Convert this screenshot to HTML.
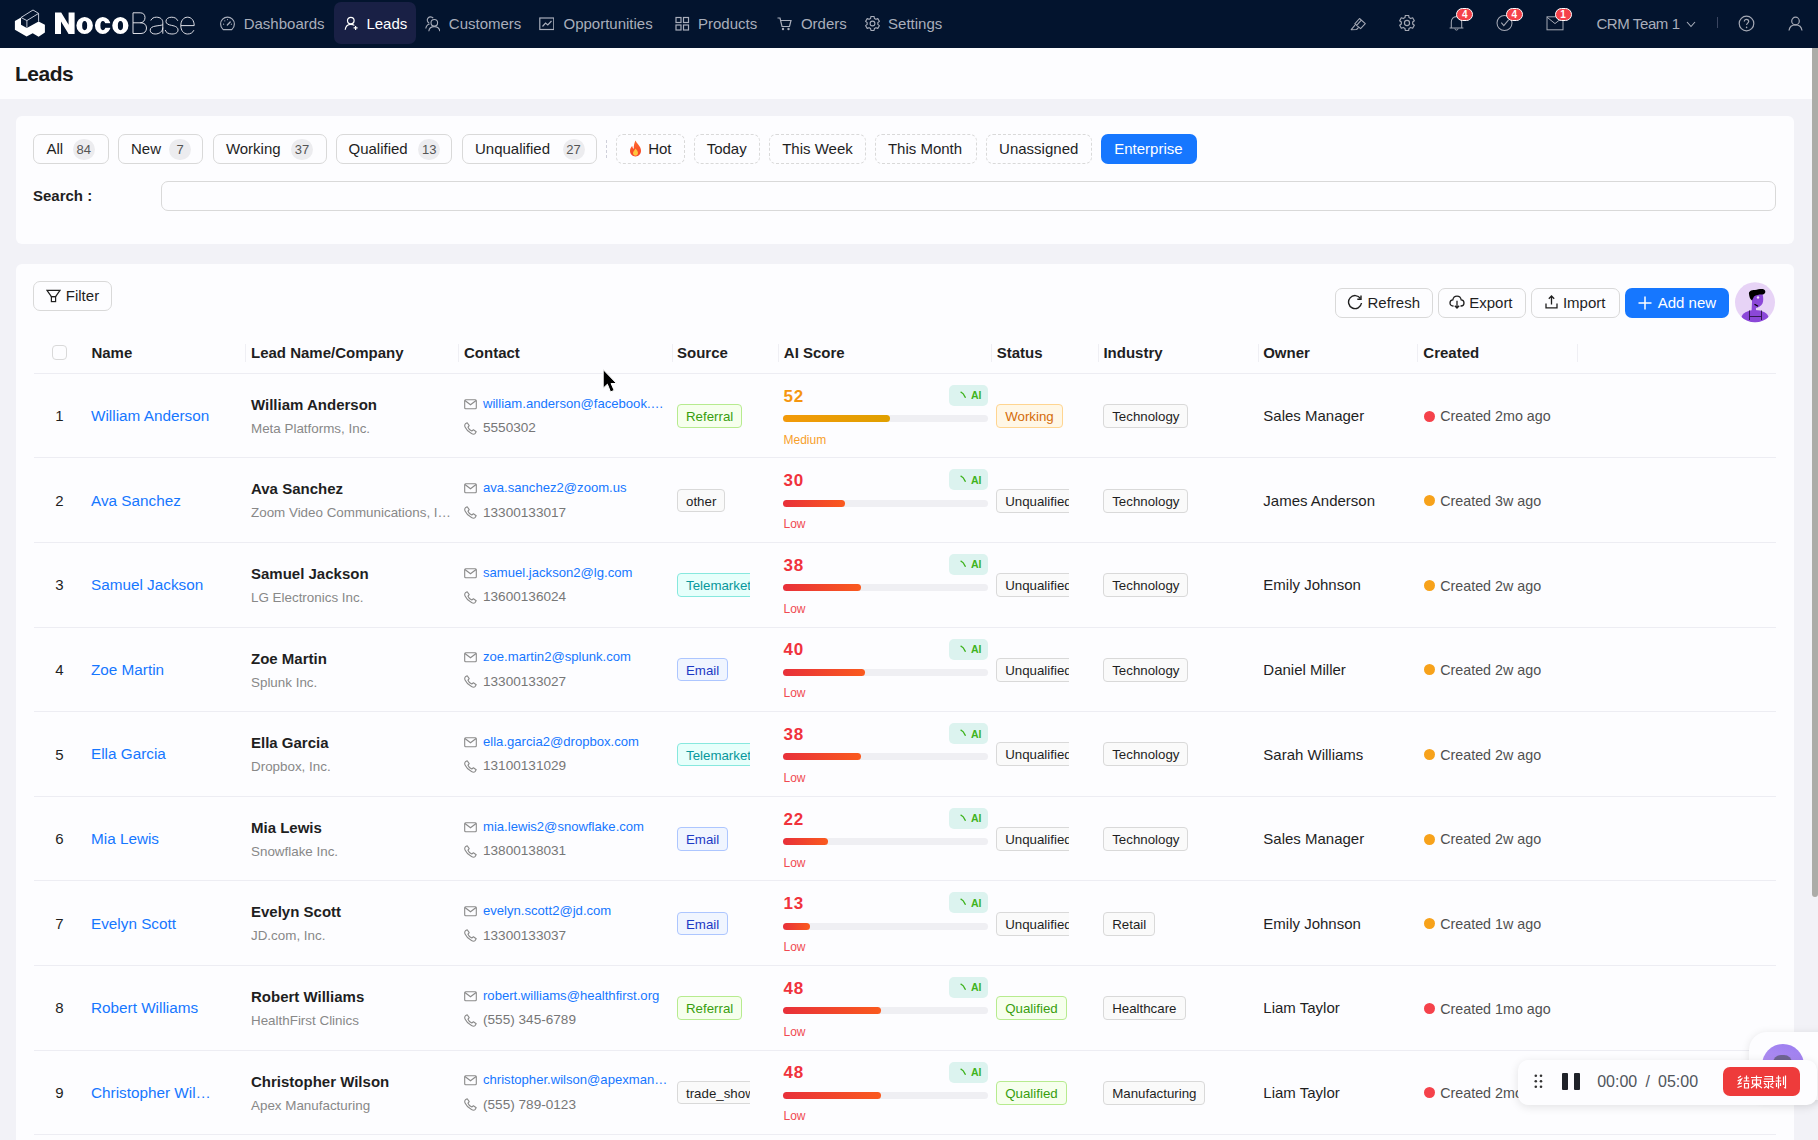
<!DOCTYPE html><html><head><meta charset="utf-8"><style>
html,body{margin:0;padding:0;}
body{width:1818px;height:1140px;overflow:hidden;position:relative;background:#f2f2f7;font-family:'Liberation Sans', sans-serif;}
.a{position:absolute;box-sizing:border-box;}
.t{position:absolute;white-space:nowrap;font-family:'Liberation Sans', sans-serif;}
</style></head><body>
<div class="a" style="left:0.0px;top:0.0px;width:1818.0px;height:48.0px;background:rgb(3,20,46);"></div>
<svg class="a" style="left:0.0px;top:0.0px;" width="50" height="45" viewBox="0 0 50 45">
<path d="M14.9 20.9 L21 17.5 L21 24.8 L26.8 27.9 L38.6 21.6 L44.9 24.8 L44.9 32.6 L38.6 36.7 L32.7 33.2 L26.6 36.5 L14.9 29.7 Z" fill="#fff"/>
<path d="M21 17.5 L33 10 L38.6 13.4 L38.6 21.6 M21 17.5 L26.9 20.6 L38.6 13.4 M26.9 20.6 L26.9 27.7" fill="none" stroke="#d8dbe6" stroke-width="0.9"/>
</svg>
<svg class="a" style="left:0.0px;top:0.0px;" width="200" height="48" viewBox="0 0 200 48"><path d="M55 12.4 H61.2 L68.6 24.8 V12.4 H74.6 V33.9 H68.6 L61 21.4 V33.9 H55 Z" fill="#fff"/>
<path fill-rule="evenodd" d="M76.40 25.5 A8.25 8.55 0 1 0 92.90 25.5 A8.25 8.55 0 1 0 76.40 25.5 Z M82.15 25.6 A2.5 4.6 0 1 0 87.15 25.6 A2.5 4.6 0 1 0 82.15 25.6 Z" fill="#fff"/>
<path fill-rule="evenodd" d="M94.90 25.5 A7.9 8.55 0 1 0 110.70 25.5 A7.9 8.55 0 1 0 94.90 25.5 Z M100.40 25.6 A2.5 4.6 0 1 0 105.40 25.6 A2.5 4.6 0 1 0 100.40 25.6 Z" fill="#fff"/>
<rect x="104.8" y="23.2" width="7" height="4.6" fill="rgb(3,20,46)"/>
<path fill-rule="evenodd" d="M112.25 25.5 A8.1 8.55 0 1 0 128.45 25.5 A8.1 8.55 0 1 0 112.25 25.5 Z M117.85 25.6 A2.6 4.6 0 1 0 123.05 25.6 A2.6 4.6 0 1 0 117.85 25.6 Z" fill="#fff"/>
<g fill="none" stroke="#e8e8ee" stroke-width="0.95">
<path d="M133 12.8 V33.5 H141 C144.5 33.5 146.5 31.2 146.5 28 C146.5 24.8 144.2 22.8 140.8 22.8 H133 M133 12.8 H140.2 C143.3 12.8 145 14.7 145 17.6 C145 20.6 143 22.8 140.2 22.8"/>
<path d="M150.8 20.5 C151.8 18.2 153.8 17.2 156.4 17.2 C160.4 17.2 162.8 19.2 162.8 22.8 V33.7 M162.8 24.8 C161.5 25.3 158.5 25.6 156 26 C152.3 26.5 150.2 27.8 150.2 30.2 C150.2 32.6 152.3 34 155.2 34 C159.3 34 162.8 31.5 162.8 27.5"/>
<path d="M177.8 20.8 C176.8 18.5 174.6 17.2 171.7 17.2 C168.3 17.2 166 18.8 166 21.3 C166 23.8 168.3 24.8 171.7 25.4 C175.5 26.1 178 27.3 178 30 C178 32.7 175.5 34 171.9 34 C168.5 34 165.8 32.5 165.2 30"/>
<path d="M180.8 25.6 H194.2 C194.2 20.5 191.5 17.2 187.5 17.2 C183.4 17.2 180.8 20.8 180.8 25.6 C180.8 30.4 183.5 34 187.6 34 C190.6 34 192.8 32.6 193.9 30.2"/>
</g></svg>
<div class="a" style="left:334.0px;top:2.0px;width:82.0px;height:42.0px;background:#192045;border-radius:7px;"></div>
<svg class="a" style="left:220.0px;top:16.0px;" width="15" height="16" viewBox="0 0 15 16"><path d="M3.2 13.6 C1.5 12.2 0.6 10.2 0.6 8 C0.6 4.1 3.7 1.2 7.5 1.2 C11.3 1.2 14.4 4.1 14.4 8 C14.4 10.2 13.5 12.2 11.8 13.6 Z" fill="none" stroke="#a9aebb" stroke-width="1.15" stroke-linejoin="round"/><path d="M7.3 9 L10.2 6" stroke="#a9aebb" stroke-width="1.3" stroke-linecap="round"/><circle cx="3.6" cy="8.2" r="0.6" fill="#a9aebb"/><circle cx="4.8" cy="4.8" r="0.6" fill="#a9aebb"/><circle cx="7.5" cy="3.6" r="0.6" fill="#a9aebb"/><circle cx="11.4" cy="8.2" r="0.6" fill="#a9aebb"/></svg>
<div class="t" style="left:243.7px;top:15.90px;font-size:15px;line-height:15px;color:#a9aebb;">Dashboards</div>
<svg class="a" style="left:343.6px;top:16.0px;" width="15" height="16" viewBox="0 0 15 16"><circle cx="6.8" cy="4.6" r="3.3" fill="none" stroke="#ffffff" stroke-width="1.2"/><path d="M1.2 13.8 C1.6 10.2 3.9 8.3 6.8 8.3 C8.2 8.3 9.5 8.7 10.4 9.4" fill="none" stroke="#ffffff" stroke-width="1.2"/><path d="M9.6 11.9 H13.6 M11.6 9.9 V13.9" stroke="#ffffff" stroke-width="1.2"/></svg>
<div class="t" style="left:366.4px;top:15.90px;font-size:15px;line-height:15px;color:#ffffff;">Leads</div>
<svg class="a" style="left:425.0px;top:16.0px;" width="15" height="16" viewBox="0 0 15 16"><path d="M8.2 2.2 A3.3 3.3 0 1 0 4.2 7.2" fill="none" stroke="#a9aebb" stroke-width="1.1"/><path d="M0.8 12.5 C1.2 10 2.8 8.4 4.6 8" fill="none" stroke="#a9aebb" stroke-width="1.1"/><circle cx="9.3" cy="6.8" r="3.3" fill="none" stroke="#a9aebb" stroke-width="1.1"/><path d="M3.8 15.2 C4.2 12.2 6.4 10.6 9.3 10.6 C12.2 10.6 14.4 12.2 14.8 15.2" fill="none" stroke="#a9aebb" stroke-width="1.1"/></svg>
<div class="t" style="left:448.8px;top:15.90px;font-size:15px;line-height:15px;color:#a9aebb;">Customers</div>
<svg class="a" style="left:539.0px;top:16.0px;" width="15" height="16" viewBox="0 0 15 16"><rect x="0.8" y="2" width="14" height="11.5" fill="none" stroke="#a9aebb" stroke-width="1.2"/><path d="M3.5 10.5 L6.5 7 L8.8 9 L12.5 5" fill="none" stroke="#a9aebb" stroke-width="1.2"/></svg>
<div class="t" style="left:563.5px;top:15.90px;font-size:15px;line-height:15px;color:#a9aebb;">Opportunities</div>
<svg class="a" style="left:675.0px;top:16.0px;" width="15" height="16" viewBox="0 0 15 16"><rect x="1" y="1.5" width="5" height="5" fill="none" stroke="#a9aebb" stroke-width="1.2"/><rect x="8.5" y="1.5" width="5" height="5" fill="none" stroke="#a9aebb" stroke-width="1.2"/><rect x="1" y="9" width="5" height="5" fill="none" stroke="#a9aebb" stroke-width="1.2"/><rect x="8.5" y="9" width="5" height="5" fill="none" stroke="#a9aebb" stroke-width="1.2"/></svg>
<div class="t" style="left:698.0px;top:15.90px;font-size:15px;line-height:15px;color:#a9aebb;">Products</div>
<svg class="a" style="left:777.0px;top:16.0px;" width="15" height="16" viewBox="0 0 15 16"><path d="M0.5 2 H3 L5 10.5 H12.5 L14 4.5 H4" fill="none" stroke="#a9aebb" stroke-width="1.2"/><circle cx="6" cy="13" r="1.2" fill="#a9aebb"/><circle cx="11.5" cy="13" r="1.2" fill="#a9aebb"/></svg>
<div class="t" style="left:800.9px;top:15.90px;font-size:15px;line-height:15px;color:#a9aebb;">Orders</div>
<svg class="a" style="left:865.0px;top:16.0px;" width="15" height="16" viewBox="0 0 15 16"><path d="M5.60 2.45 L5.93 0.47 L9.07 0.47 L9.40 2.45 L10.93 3.33 L12.80 2.63 L14.37 5.35 L12.83 6.62 L12.83 8.38 L14.37 9.65 L12.80 12.37 L10.93 11.67 L9.40 12.55 L9.07 14.53 L5.93 14.53 L5.60 12.55 L4.07 11.67 L2.20 12.37 L0.63 9.65 L2.17 8.38 L2.17 6.62 L0.63 5.35 L2.20 2.63 L4.07 3.33 Z" fill="none" stroke="#a9aebb" stroke-width="1.1" stroke-linejoin="round"/><circle cx="7.5" cy="7.5" r="2.4" fill="none" stroke="#a9aebb" stroke-width="1.1"/></svg>
<div class="t" style="left:888.1px;top:15.90px;font-size:15px;line-height:15px;color:#a9aebb;">Settings</div>
<svg class="a" style="left:1349.0px;top:16.0px;" width="18" height="16" viewBox="0 0 18 16"><path d="M5.8 7.8 L10.5 2.5 L16.3 7.6 L11.6 12.6 Z M7.6 9.3 L12.1 4.3" fill="none" stroke="#a3a7b3" stroke-width="1.1" stroke-linejoin="round"/><path d="M6 9.2 L2.2 13.7 L7.6 13.5 L9.6 11.4" fill="none" stroke="#a3a7b3" stroke-width="1.1" stroke-linejoin="round"/></svg>
<svg class="a" style="left:1399.0px;top:15.0px;" width="16" height="16" viewBox="0 0 15 15"><path d="M5.60 2.45 L5.93 0.47 L9.07 0.47 L9.40 2.45 L10.93 3.33 L12.80 2.63 L14.37 5.35 L12.83 6.62 L12.83 8.38 L14.37 9.65 L12.80 12.37 L10.93 11.67 L9.40 12.55 L9.07 14.53 L5.93 14.53 L5.60 12.55 L4.07 11.67 L2.20 12.37 L0.63 9.65 L2.17 8.38 L2.17 6.62 L0.63 5.35 L2.20 2.63 L4.07 3.33 Z" fill="none" stroke="#a3a7b3" stroke-width="1.1" stroke-linejoin="round"/><circle cx="7.5" cy="7.5" r="2.4" fill="none" stroke="#a3a7b3" stroke-width="1.1"/></svg>
<svg class="a" style="left:1449.0px;top:14.0px;" width="15" height="18" viewBox="0 0 15 18"><path d="M2.3 14 V8 C2.3 4.6 4.4 2.6 7.5 2.6 C10.6 2.6 12.7 4.6 12.7 8 V14 M0.6 14 H14.4" fill="none" stroke="#a3a7b3" stroke-width="1.05"/><path d="M5.9 14.6 C5.9 16.6 9.1 16.6 9.1 14.6" fill="none" stroke="#a3a7b3" stroke-width="1"/></svg>
<svg class="a" style="left:1496.0px;top:13.0px;" width="18" height="19" viewBox="0 0 18 19"><circle cx="8.5" cy="10" r="7.5" fill="none" stroke="#a3a7b3" stroke-width="1.05"/><path d="M5.3 9.6 L7.8 12.6 L12.6 6.8" fill="none" stroke="#a3a7b3" stroke-width="1.05"/></svg>
<svg class="a" style="left:1545.5px;top:15.5px;" width="18" height="15" viewBox="0 0 18 15"><rect x="1" y="0.8" width="16" height="13" fill="none" stroke="#a3a7b3" stroke-width="1"/><path d="M1 1.2 L9 7.6 L17 1.2" fill="none" stroke="#a3a7b3" stroke-width="1"/></svg>
<div class="a" style="left:1456.2px;top:7.8px;width:17px;height:13.5px;background:#f5424a;border:1px solid #fff;border-radius:7px;color:#fff;font:700 10px/11.5px 'Liberation Sans', sans-serif;text-align:center;">4</div>
<div class="a" style="left:1505.7px;top:7.8px;width:17px;height:13.5px;background:#f5424a;border:1px solid #fff;border-radius:7px;color:#fff;font:700 10px/11.5px 'Liberation Sans', sans-serif;text-align:center;">4</div>
<div class="a" style="left:1554.5px;top:7.8px;width:17px;height:13.5px;background:#f5424a;border:1px solid #fff;border-radius:7px;color:#fff;font:700 10px/11.5px 'Liberation Sans', sans-serif;text-align:center;">1</div>
<div class="t" style="left:1596.4px;top:16.00px;font-size:15px;line-height:15px;color:#a9aebb;letter-spacing:-0.4px;">CRM Team 1</div>
<svg class="a" style="left:1686.0px;top:21.0px;" width="10" height="7" viewBox="0 0 10 7"><path d="M1 1 L5 5.5 L9 1" fill="none" stroke="#a9aebb" stroke-width="1.1"/></svg>
<div class="a" style="left:1717.0px;top:17.0px;width:1.0px;height:11.0px;background:#3a4560;"></div>
<svg class="a" style="left:1738.0px;top:15.0px;" width="17" height="17" viewBox="0 0 17 17"><circle cx="8.5" cy="8.5" r="7.3" fill="none" stroke="#a3a7b3" stroke-width="1.2"/><path d="M6.3 6.6 C6.3 5.2 7.3 4.3 8.5 4.3 C9.8 4.3 10.7 5.2 10.7 6.4 C10.7 8 8.6 8.2 8.6 10" fill="none" stroke="#a3a7b3" stroke-width="1.2"/><circle cx="8.6" cy="12.4" r="0.8" fill="#a3a7b3"/></svg>
<svg class="a" style="left:1788.0px;top:16.0px;" width="15" height="15" viewBox="0 0 15 15"><circle cx="7.5" cy="5" r="3.8" fill="none" stroke="#a3a7b3" stroke-width="1.2"/><path d="M1 14.5 C1.5 10.7 4 8.8 7.5 8.8 C11 8.8 13.5 10.7 14 14.5" fill="none" stroke="#a3a7b3" stroke-width="1.2"/></svg>
<div class="a" style="left:0.0px;top:48.0px;width:1812.0px;height:51.0px;background:#fdfdff;"></div>
<div class="t" style="left:15.0px;top:62.80px;font-size:21px;line-height:21px;color:#1a1a1a;font-weight:700;letter-spacing:-0.5px;">Leads</div>
<div class="a" style="left:1812.0px;top:48.0px;width:6.0px;height:849.0px;background:#acaca8;border-radius:0 0 3px 3px;"></div>
<div class="a" style="left:16.0px;top:116.0px;width:1778.0px;height:128.0px;background:#fdfdff;border-radius:6px;"></div>
<div class="a" style="left:33.0px;top:134.0px;width:76.0px;height:30.0px;background:#fdfdff;border:1px solid #d9d9d9;border-radius:7px;"></div>
<div class="t" style="left:46.4px;top:141.00px;font-size:15px;line-height:15px;color:#1f1f1f;">All</div>
<div class="a" style="left:72.8px;top:138.7px;width:22px;height:21px;border-radius:11px;background:#ececef;color:#555;font:13px/21px 'Liberation Sans', sans-serif;text-align:center;">84</div>
<div class="a" style="left:118.0px;top:134.0px;width:85.0px;height:30.0px;background:#fdfdff;border:1px solid #d9d9d9;border-radius:7px;"></div>
<div class="t" style="left:131.0px;top:141.00px;font-size:15px;line-height:15px;color:#1f1f1f;">New</div>
<div class="a" style="left:169.0px;top:138.7px;width:22px;height:21px;border-radius:11px;background:#ececef;color:#555;font:13px/21px 'Liberation Sans', sans-serif;text-align:center;">7</div>
<div class="a" style="left:213.0px;top:134.0px;width:114.0px;height:30.0px;background:#fdfdff;border:1px solid #d9d9d9;border-radius:7px;"></div>
<div class="t" style="left:225.9px;top:141.00px;font-size:15px;line-height:15px;color:#1f1f1f;">Working</div>
<div class="a" style="left:291.0px;top:138.7px;width:22px;height:21px;border-radius:11px;background:#ececef;color:#555;font:13px/21px 'Liberation Sans', sans-serif;text-align:center;">37</div>
<div class="a" style="left:336.0px;top:134.0px;width:116.0px;height:30.0px;background:#fdfdff;border:1px solid #d9d9d9;border-radius:7px;"></div>
<div class="t" style="left:348.5px;top:141.00px;font-size:15px;line-height:15px;color:#1f1f1f;">Qualified</div>
<div class="a" style="left:418.2px;top:138.7px;width:22px;height:21px;border-radius:11px;background:#ececef;color:#555;font:13px/21px 'Liberation Sans', sans-serif;text-align:center;">13</div>
<div class="a" style="left:462.0px;top:134.0px;width:135.0px;height:30.0px;background:#fdfdff;border:1px solid #d9d9d9;border-radius:7px;"></div>
<div class="t" style="left:475.0px;top:141.00px;font-size:15px;line-height:15px;color:#1f1f1f;">Unqualified</div>
<div class="a" style="left:562.6px;top:138.7px;width:22px;height:21px;border-radius:11px;background:#ececef;color:#555;font:13px/21px 'Liberation Sans', sans-serif;text-align:center;">27</div>
<div class="a" style="left:606.0px;top:140.0px;width:1.0px;height:18.0px;border-left:1px dashed #cfd0da;"></div>
<div class="a" style="left:616.0px;top:134.0px;width:69.0px;height:30.0px;background:#fdfdff;border:1px dashed #d9d9d9;border-radius:7px;"></div>
<svg class="a" style="left:629.0px;top:140.0px;" width="13" height="17" viewBox="0 0 13 17"><defs><linearGradient id="fl" x1="0" y1="0" x2="0" y2="1"><stop offset="0" stop-color="#ff6a2b"/><stop offset="1" stop-color="#f5402a"/></linearGradient></defs><path d="M6.5 0.5 C7.5 3.5 12 6 12 10.8 C12 14 9.6 16.5 6.5 16.5 C3.4 16.5 1 14 1 10.8 C1 8.5 2.2 7 3.2 6 C3.4 7.5 4 8.5 4.8 8.8 C4.5 5.5 5.5 2.5 6.5 0.5 Z" fill="url(#fl)"/><path d="M6.5 8.5 C7.5 10 9 11 9 13 C9 14.6 7.9 15.8 6.5 15.8 C5.1 15.8 4 14.6 4 13 C4 11.5 5.5 10.5 6.5 8.5 Z" fill="#ffc53d"/></svg>
<div class="t" style="left:648.2px;top:141.00px;font-size:15px;line-height:15px;color:#1f1f1f;">Hot</div>
<div class="a" style="left:694.0px;top:134.0px;width:66.0px;height:30.0px;background:#fdfdff;border:1px dashed #d9d9d9;border-radius:7px;"></div>
<div class="t" style="left:706.7px;top:141.00px;font-size:15px;line-height:15px;color:#1f1f1f;">Today</div>
<div class="a" style="left:769.0px;top:134.0px;width:97.0px;height:30.0px;background:#fdfdff;border:1px dashed #d9d9d9;border-radius:7px;"></div>
<div class="t" style="left:782.2px;top:141.00px;font-size:15px;line-height:15px;color:#1f1f1f;">This Week</div>
<div class="a" style="left:875.0px;top:134.0px;width:102.0px;height:30.0px;background:#fdfdff;border:1px dashed #d9d9d9;border-radius:7px;"></div>
<div class="t" style="left:887.9px;top:141.00px;font-size:15px;line-height:15px;color:#1f1f1f;">This Month</div>
<div class="a" style="left:986.0px;top:134.0px;width:106.0px;height:30.0px;background:#fdfdff;border:1px dashed #d9d9d9;border-radius:7px;"></div>
<div class="t" style="left:999.1px;top:141.00px;font-size:15px;line-height:15px;color:#1f1f1f;">Unassigned</div>
<div class="a" style="left:1101.0px;top:134.0px;width:96.0px;height:30.0px;background:#1677ff;border-radius:7px;"></div>
<div class="t" style="left:1114.2px;top:141.00px;font-size:15px;line-height:15px;color:#fff;">Enterprise</div>
<div class="t" style="left:33.0px;top:188.20px;font-size:15px;line-height:15px;color:#1f1f1f;font-weight:700;">Search :</div>
<div class="a" style="left:161.0px;top:181.0px;width:1615.0px;height:30.0px;border:1px solid #d9d9d9;border-radius:7px;background:#fdfdff;"></div>
<div class="a" style="left:16.0px;top:264.0px;width:1778.0px;height:936.0px;background:#fdfdff;border-radius:6px;"></div>
<div class="a" style="left:33.0px;top:281.0px;width:79.0px;height:30.0px;border:1px solid #d9d9d9;border-radius:7px;"></div>
<svg class="a" style="left:46.0px;top:289.0px;" width="15" height="15" viewBox="0 0 15 15"><path d="M1 1.4 H14 L9.6 7.6 H5.4 Z" fill="none" stroke="#1f1f1f" stroke-width="1.2" stroke-linejoin="miter"/><rect x="5.4" y="7.6" width="4.2" height="5" fill="none" stroke="#1f1f1f" stroke-width="1.2"/></svg>
<div class="t" style="left:65.8px;top:288.10px;font-size:15px;line-height:15px;color:#1f1f1f;">Filter</div>
<div class="a" style="left:1335.0px;top:288.0px;width:97.5px;height:29.5px;border:1px solid #d9d9d9;border-radius:7px;"></div>
<div class="a" style="left:1437.6px;top:288.0px;width:88.6px;height:29.5px;border:1px solid #d9d9d9;border-radius:7px;"></div>
<div class="a" style="left:1531.2px;top:288.0px;width:89.3px;height:29.5px;border:1px solid #d9d9d9;border-radius:7px;"></div>
<svg class="a" style="left:1347.0px;top:294.0px;" width="16" height="16" viewBox="0 0 16 16"><path d="M13.5 4.5 A6.5 6.5 0 1 0 14.5 9" fill="none" stroke="#1f1f1f" stroke-width="1.4"/><path d="M14 1.5 V5.2 H10.3" fill="none" stroke="#1f1f1f" stroke-width="1.4"/></svg>
<div class="t" style="left:1367.5px;top:295.10px;font-size:15px;line-height:15px;color:#1f1f1f;">Refresh</div>
<svg class="a" style="left:1449.0px;top:295.0px;" width="16" height="14" viewBox="0 0 16 14"><path d="M4.5 11 H4 C2.2 11 1 9.7 1 8 C1 6.3 2.2 5 3.8 4.9 C4.2 2.7 6 1.2 8 1.2 C10 1.2 11.8 2.7 12.2 4.9 C13.8 5 15 6.3 15 8 C15 9.7 13.8 11 12 11 H11.5" fill="none" stroke="#1f1f1f" stroke-width="1.3"/><path d="M8 5.8 V13 M5.8 10.8 L8 13 L10.2 10.8" fill="none" stroke="#1f1f1f" stroke-width="1.3"/></svg>
<div class="t" style="left:1469.2px;top:295.10px;font-size:15px;line-height:15px;color:#1f1f1f;">Export</div>
<svg class="a" style="left:1544.5px;top:295.0px;" width="13" height="14" viewBox="0 0 13 14"><path d="M6.5 1 V9.5 M3.8 3.7 L6.5 1 L9.2 3.7" fill="none" stroke="#1f1f1f" stroke-width="1.3"/><path d="M1 8.5 V12.8 H12 V8.5" fill="none" stroke="#1f1f1f" stroke-width="1.3"/></svg>
<div class="t" style="left:1562.9px;top:295.10px;font-size:15px;line-height:15px;color:#1f1f1f;">Import</div>
<div class="a" style="left:1625.4px;top:288.0px;width:104.0px;height:29.5px;background:#1677ff;border-radius:7px;"></div>
<svg class="a" style="left:1638.0px;top:296.0px;" width="14" height="14" viewBox="0 0 14 14"><path d="M7 0.5 V13.5 M0.5 7 H13.5" stroke="#fff" stroke-width="1.5"/></svg>
<div class="t" style="left:1657.7px;top:295.10px;font-size:15px;line-height:15px;color:#fff;">Add new</div>
<svg class="a" style="left:1735.0px;top:282.0px;" width="40" height="41" viewBox="0 0 40 41"><defs><clipPath id="av"><circle cx="20" cy="20.3" r="20"/></clipPath></defs>
<circle cx="20" cy="20.3" r="20" fill="#e7d3f6"/>
<g clip-path="url(#av)">
<ellipse cx="20" cy="36" rx="13.5" ry="8" fill="#8b47d8"/>
<path d="M17 12.5 L27.5 12 C28.5 15 28.5 19 27.5 21.5 C26 24 23.5 25.5 21 26 L21 30 L16.5 30 L17 20 Z" fill="#8b47d8"/>
<path d="M14 12 C13.5 9.5 16 8 20 8 C24 7 28.5 6 30 8.5 C31 10.5 29.5 12.5 27 12.5 C24 12.5 21 13 19 14.5 L17 18.5 C15 17 14.2 14.5 14 12 Z" fill="#000"/>
<path d="M19.5 22.3 L23 24.3" stroke="#000" stroke-width="1.3"/>
<circle cx="23" cy="15.5" r="1.2" fill="#f0e0ff"/>
<path d="M14.5 28.5 V38 M26.5 28.5 V38 M14.5 34.5 H26.5" stroke="#2b1545" stroke-width="0.9"/>
</g></svg>
<div class="a" style="left:52.0px;top:345.0px;width:15.0px;height:15.0px;border:1px solid #d9d9d9;border-radius:4px;background:#fdfdff;"></div>
<div class="t" style="left:91.4px;top:345.40px;font-size:15px;line-height:15px;color:#1f1f1f;font-weight:700;">Name</div>
<div class="t" style="left:251.0px;top:345.40px;font-size:15px;line-height:15px;color:#1f1f1f;font-weight:700;">Lead Name/Company</div>
<div class="t" style="left:464.0px;top:345.40px;font-size:15px;line-height:15px;color:#1f1f1f;font-weight:700;">Contact</div>
<div class="t" style="left:677.0px;top:345.40px;font-size:15px;line-height:15px;color:#1f1f1f;font-weight:700;">Source</div>
<div class="t" style="left:783.8px;top:345.40px;font-size:15px;line-height:15px;color:#1f1f1f;font-weight:700;">AI Score</div>
<div class="t" style="left:996.7px;top:345.40px;font-size:15px;line-height:15px;color:#1f1f1f;font-weight:700;">Status</div>
<div class="t" style="left:1103.4px;top:345.40px;font-size:15px;line-height:15px;color:#1f1f1f;font-weight:700;">Industry</div>
<div class="t" style="left:1263.2px;top:345.40px;font-size:15px;line-height:15px;color:#1f1f1f;font-weight:700;">Owner</div>
<div class="t" style="left:1423.3px;top:345.40px;font-size:15px;line-height:15px;color:#1f1f1f;font-weight:700;">Created</div>
<div class="a" style="left:244.8px;top:344.0px;width:1.0px;height:18.0px;background:#efeff4;"></div>
<div class="a" style="left:457.7px;top:344.0px;width:1.0px;height:18.0px;background:#efeff4;"></div>
<div class="a" style="left:672.0px;top:344.0px;width:1.0px;height:18.0px;background:#efeff4;"></div>
<div class="a" style="left:777.8px;top:344.0px;width:1.0px;height:18.0px;background:#efeff4;"></div>
<div class="a" style="left:991.0px;top:344.0px;width:1.0px;height:18.0px;background:#efeff4;"></div>
<div class="a" style="left:1098.0px;top:344.0px;width:1.0px;height:18.0px;background:#efeff4;"></div>
<div class="a" style="left:1257.8px;top:344.0px;width:1.0px;height:18.0px;background:#efeff4;"></div>
<div class="a" style="left:1417.3px;top:344.0px;width:1.0px;height:18.0px;background:#efeff4;"></div>
<div class="a" style="left:1576.8px;top:344.0px;width:1.0px;height:18.0px;background:#efeff4;"></div>
<div class="a" style="left:34.0px;top:372.8px;width:1742.0px;height:1.0px;background:#ededf3;"></div>
<div class="t" style="left:55.2px;top:408.10px;font-size:15px;line-height:15px;color:#1f1f1f;">1</div>
<div class="t" style="left:91.0px;top:407.95px;font-size:15.3px;line-height:15.3px;color:#1677ff;">William Anderson</div>
<div class="t" style="left:251.0px;top:396.70px;font-size:15px;line-height:15px;color:#1f1f1f;font-weight:700;">William Anderson</div>
<div class="t" style="left:251.0px;top:421.80px;font-size:13.4px;line-height:13.4px;color:#888888;">Meta Platforms, Inc.</div>
<svg class="a" style="left:464.0px;top:398.6px;" width="13" height="11" viewBox="0 0 13 11"><rect x="0.7" y="0.7" width="11.6" height="9" rx="1" fill="none" stroke="#8a8a8a" stroke-width="1.1"/><path d="M0.9 1.5 L6.5 5.8 L12.1 1.5" fill="none" stroke="#8a8a8a" stroke-width="1.1"/></svg>
<div class="t" style="left:483.0px;top:396.55px;font-size:13.1px;line-height:13.1px;color:#1677ff;">william.anderson@facebook.…</div>
<svg class="a" style="left:464.0px;top:421.5px;" width="13" height="13" viewBox="0 0 13 13"><path d="M3.2 0.8 L5.2 3.6 L4 5.2 C4.6 6.8 6.2 8.4 7.8 9 L9.4 7.8 L12.2 9.8 L11 11.6 C10.2 12.4 9 12.4 7.5 11.6 C4.5 10 2.5 8 1.2 5.2 C0.5 3.8 0.6 2.6 1.4 1.8 Z" fill="none" stroke="#8a8a8a" stroke-width="1.1" stroke-linejoin="round"/></svg>
<div class="t" style="left:483.0px;top:421.00px;font-size:13.6px;line-height:13.6px;color:#777777;">5550302</div>
<div class="a" style="left:677.0px;top:404.1px;height:23.5px;"><div class="a" style="left:0;top:0;height:23.5px;border:1px solid #b7eb8f;background:#f6ffed;border-radius:4px;padding:0 8px;color:#389e0d;font:13.3px/23.1px 'Liberation Sans', sans-serif;white-space:nowrap;position:relative;display:inline-block;">Referral</div></div>
<div class="t" style="left:783.6px;top:387.50px;font-size:17px;line-height:17px;color:#f5960f;font-weight:700;letter-spacing:0.7px;">52</div>
<div class="a" style="left:949px;top:384.8px;width:39px;height:21px;background:#dcf3ef;border-radius:5px;"></div>
<svg class="a" style="left:959.5px;top:390.8px;" width="7" height="8" viewBox="0 0 7 8"><path d="M1 1.2 C2.5 1.8 4 3.5 5.2 6.3" fill="none" stroke="#3fb31e" stroke-width="1.4" stroke-linecap="round"/></svg>
<div class="t" style="left:971.0px;top:390.25px;font-size:10.5px;line-height:10.5px;color:#3fb31e;font-weight:700;">AI</div>
<div class="a" style="left:783.0px;top:414.9px;width:205.0px;height:7.0px;background:#efeff3;border-radius:4px;"></div>
<div class="a" style="left:783.0px;top:414.9px;width:106.6px;height:7.0px;background:linear-gradient(90deg,#f39a0a,#e0a000);border-radius:4px;"></div>
<div class="t" style="left:783.5px;top:433.65px;font-size:12px;line-height:12px;color:#f7a02a;">Medium</div>
<div class="a" style="left:996.2px;top:403.9px;height:24px;"><div class="a" style="left:0;top:0;height:24px;border:1px solid #ffd591;background:#fff7e6;border-radius:4px;padding:0 8px;color:#d46b08;font:13.3px/23.6px 'Liberation Sans', sans-serif;white-space:nowrap;position:relative;display:inline-block;">Working</div></div>
<div class="a" style="left:1103.2px;top:403.9px;height:24px;"><div class="a" style="left:0;top:0;height:24px;border:1px solid #d9d9d9;background:#fafafa;border-radius:4px;padding:0 8px;color:#1f1f1f;font:13.3px/23.6px 'Liberation Sans', sans-serif;white-space:nowrap;position:relative;display:inline-block;">Technology</div></div>
<div class="t" style="left:1263.3px;top:408.25px;font-size:15px;line-height:15px;color:#1f1f1f;">Sales Manager</div>
<div class="a" style="left:1423.7px;top:410.6px;width:11px;height:11px;border-radius:50%;background:#f5424b;"></div>
<div class="t" style="left:1440.2px;top:409.35px;font-size:14.3px;line-height:14.3px;color:#505050;">Created 2mo ago</div>
<div class="a" style="left:34.0px;top:457.4px;width:1742.0px;height:1.0px;background:#ededf3;"></div>
<div class="t" style="left:55.2px;top:492.70px;font-size:15px;line-height:15px;color:#1f1f1f;">2</div>
<div class="t" style="left:91.0px;top:492.55px;font-size:15.3px;line-height:15.3px;color:#1677ff;">Ava Sanchez</div>
<div class="t" style="left:251.0px;top:481.30px;font-size:15px;line-height:15px;color:#1f1f1f;font-weight:700;">Ava Sanchez</div>
<div class="t" style="left:251.0px;top:506.40px;font-size:13.4px;line-height:13.4px;color:#888888;">Zoom Video Communications, I…</div>
<svg class="a" style="left:464.0px;top:483.2px;" width="13" height="11" viewBox="0 0 13 11"><rect x="0.7" y="0.7" width="11.6" height="9" rx="1" fill="none" stroke="#8a8a8a" stroke-width="1.1"/><path d="M0.9 1.5 L6.5 5.8 L12.1 1.5" fill="none" stroke="#8a8a8a" stroke-width="1.1"/></svg>
<div class="t" style="left:483.0px;top:481.15px;font-size:13.1px;line-height:13.1px;color:#1677ff;">ava.sanchez2@zoom.us</div>
<svg class="a" style="left:464.0px;top:506.1px;" width="13" height="13" viewBox="0 0 13 13"><path d="M3.2 0.8 L5.2 3.6 L4 5.2 C4.6 6.8 6.2 8.4 7.8 9 L9.4 7.8 L12.2 9.8 L11 11.6 C10.2 12.4 9 12.4 7.5 11.6 C4.5 10 2.5 8 1.2 5.2 C0.5 3.8 0.6 2.6 1.4 1.8 Z" fill="none" stroke="#8a8a8a" stroke-width="1.1" stroke-linejoin="round"/></svg>
<div class="t" style="left:483.0px;top:505.60px;font-size:13.6px;line-height:13.6px;color:#777777;">13300133017</div>
<div class="a" style="left:677.0px;top:488.7px;height:23.5px;"><div class="a" style="left:0;top:0;height:23.5px;border:1px solid #d9d9d9;background:#fafafa;border-radius:4px;padding:0 8px;color:#1f1f1f;font:13.3px/23.1px 'Liberation Sans', sans-serif;white-space:nowrap;position:relative;display:inline-block;">other</div></div>
<div class="t" style="left:783.6px;top:472.10px;font-size:17px;line-height:17px;color:#f0323c;font-weight:700;letter-spacing:0.7px;">30</div>
<div class="a" style="left:949px;top:469.4px;width:39px;height:21px;background:#dcf3ef;border-radius:5px;"></div>
<svg class="a" style="left:959.5px;top:475.4px;" width="7" height="8" viewBox="0 0 7 8"><path d="M1 1.2 C2.5 1.8 4 3.5 5.2 6.3" fill="none" stroke="#3fb31e" stroke-width="1.4" stroke-linecap="round"/></svg>
<div class="t" style="left:971.0px;top:474.85px;font-size:10.5px;line-height:10.5px;color:#3fb31e;font-weight:700;">AI</div>
<div class="a" style="left:783.0px;top:499.5px;width:205.0px;height:7.0px;background:#efeff3;border-radius:4px;"></div>
<div class="a" style="left:783.0px;top:499.5px;width:61.5px;height:7.0px;background:linear-gradient(90deg,#e8303a,#fa5a1e);border-radius:4px;"></div>
<div class="t" style="left:783.5px;top:518.25px;font-size:12px;line-height:12px;color:#f04a52;">Low</div>
<div class="a" style="left:996.2px;top:488.5px;width:73px;height:24px;overflow:hidden;"><div class="a" style="left:0;top:0;height:24px;border:1px solid #d9d9d9;background:#fafafa;border-radius:4px;padding:0 8px;color:#1f1f1f;font:13.3px/23.6px 'Liberation Sans', sans-serif;white-space:nowrap;position:relative;display:inline-block;">Unqualified</div></div>
<div class="a" style="left:1103.2px;top:488.5px;height:24px;"><div class="a" style="left:0;top:0;height:24px;border:1px solid #d9d9d9;background:#fafafa;border-radius:4px;padding:0 8px;color:#1f1f1f;font:13.3px/23.6px 'Liberation Sans', sans-serif;white-space:nowrap;position:relative;display:inline-block;">Technology</div></div>
<div class="t" style="left:1263.3px;top:492.85px;font-size:15px;line-height:15px;color:#1f1f1f;">James Anderson</div>
<div class="a" style="left:1423.7px;top:495.2px;width:11px;height:11px;border-radius:50%;background:#f7a21b;"></div>
<div class="t" style="left:1440.2px;top:493.95px;font-size:14.3px;line-height:14.3px;color:#505050;">Created 3w ago</div>
<div class="a" style="left:34.0px;top:542.0px;width:1742.0px;height:1.0px;background:#ededf3;"></div>
<div class="t" style="left:55.2px;top:577.30px;font-size:15px;line-height:15px;color:#1f1f1f;">3</div>
<div class="t" style="left:91.0px;top:577.15px;font-size:15.3px;line-height:15.3px;color:#1677ff;">Samuel Jackson</div>
<div class="t" style="left:251.0px;top:565.90px;font-size:15px;line-height:15px;color:#1f1f1f;font-weight:700;">Samuel Jackson</div>
<div class="t" style="left:251.0px;top:591.00px;font-size:13.4px;line-height:13.4px;color:#888888;">LG Electronics Inc.</div>
<svg class="a" style="left:464.0px;top:567.8px;" width="13" height="11" viewBox="0 0 13 11"><rect x="0.7" y="0.7" width="11.6" height="9" rx="1" fill="none" stroke="#8a8a8a" stroke-width="1.1"/><path d="M0.9 1.5 L6.5 5.8 L12.1 1.5" fill="none" stroke="#8a8a8a" stroke-width="1.1"/></svg>
<div class="t" style="left:483.0px;top:565.75px;font-size:13.1px;line-height:13.1px;color:#1677ff;">samuel.jackson2@lg.com</div>
<svg class="a" style="left:464.0px;top:590.7px;" width="13" height="13" viewBox="0 0 13 13"><path d="M3.2 0.8 L5.2 3.6 L4 5.2 C4.6 6.8 6.2 8.4 7.8 9 L9.4 7.8 L12.2 9.8 L11 11.6 C10.2 12.4 9 12.4 7.5 11.6 C4.5 10 2.5 8 1.2 5.2 C0.5 3.8 0.6 2.6 1.4 1.8 Z" fill="none" stroke="#8a8a8a" stroke-width="1.1" stroke-linejoin="round"/></svg>
<div class="t" style="left:483.0px;top:590.20px;font-size:13.6px;line-height:13.6px;color:#777777;">13600136024</div>
<div class="a" style="left:677.0px;top:573.3px;width:73px;height:23.5px;overflow:hidden;"><div class="a" style="left:0;top:0;height:23.5px;border:1px solid #87e8de;background:#e6fffb;border-radius:4px;padding:0 8px;color:#08979c;font:13.3px/23.1px 'Liberation Sans', sans-serif;white-space:nowrap;position:relative;display:inline-block;">Telemarketing</div></div>
<div class="t" style="left:783.6px;top:556.70px;font-size:17px;line-height:17px;color:#f0323c;font-weight:700;letter-spacing:0.7px;">38</div>
<div class="a" style="left:949px;top:554.0px;width:39px;height:21px;background:#dcf3ef;border-radius:5px;"></div>
<svg class="a" style="left:959.5px;top:560.0px;" width="7" height="8" viewBox="0 0 7 8"><path d="M1 1.2 C2.5 1.8 4 3.5 5.2 6.3" fill="none" stroke="#3fb31e" stroke-width="1.4" stroke-linecap="round"/></svg>
<div class="t" style="left:971.0px;top:559.45px;font-size:10.5px;line-height:10.5px;color:#3fb31e;font-weight:700;">AI</div>
<div class="a" style="left:783.0px;top:584.1px;width:205.0px;height:7.0px;background:#efeff3;border-radius:4px;"></div>
<div class="a" style="left:783.0px;top:584.1px;width:77.9px;height:7.0px;background:linear-gradient(90deg,#e8303a,#fa5a1e);border-radius:4px;"></div>
<div class="t" style="left:783.5px;top:602.85px;font-size:12px;line-height:12px;color:#f04a52;">Low</div>
<div class="a" style="left:996.2px;top:573.1px;width:73px;height:24px;overflow:hidden;"><div class="a" style="left:0;top:0;height:24px;border:1px solid #d9d9d9;background:#fafafa;border-radius:4px;padding:0 8px;color:#1f1f1f;font:13.3px/23.6px 'Liberation Sans', sans-serif;white-space:nowrap;position:relative;display:inline-block;">Unqualified</div></div>
<div class="a" style="left:1103.2px;top:573.1px;height:24px;"><div class="a" style="left:0;top:0;height:24px;border:1px solid #d9d9d9;background:#fafafa;border-radius:4px;padding:0 8px;color:#1f1f1f;font:13.3px/23.6px 'Liberation Sans', sans-serif;white-space:nowrap;position:relative;display:inline-block;">Technology</div></div>
<div class="t" style="left:1263.3px;top:577.45px;font-size:15px;line-height:15px;color:#1f1f1f;">Emily Johnson</div>
<div class="a" style="left:1423.7px;top:579.8px;width:11px;height:11px;border-radius:50%;background:#f7a21b;"></div>
<div class="t" style="left:1440.2px;top:578.55px;font-size:14.3px;line-height:14.3px;color:#505050;">Created 2w ago</div>
<div class="a" style="left:34.0px;top:626.6px;width:1742.0px;height:1.0px;background:#ededf3;"></div>
<div class="t" style="left:55.2px;top:661.90px;font-size:15px;line-height:15px;color:#1f1f1f;">4</div>
<div class="t" style="left:91.0px;top:661.75px;font-size:15.3px;line-height:15.3px;color:#1677ff;">Zoe Martin</div>
<div class="t" style="left:251.0px;top:650.50px;font-size:15px;line-height:15px;color:#1f1f1f;font-weight:700;">Zoe Martin</div>
<div class="t" style="left:251.0px;top:675.60px;font-size:13.4px;line-height:13.4px;color:#888888;">Splunk Inc.</div>
<svg class="a" style="left:464.0px;top:652.4px;" width="13" height="11" viewBox="0 0 13 11"><rect x="0.7" y="0.7" width="11.6" height="9" rx="1" fill="none" stroke="#8a8a8a" stroke-width="1.1"/><path d="M0.9 1.5 L6.5 5.8 L12.1 1.5" fill="none" stroke="#8a8a8a" stroke-width="1.1"/></svg>
<div class="t" style="left:483.0px;top:650.35px;font-size:13.1px;line-height:13.1px;color:#1677ff;">zoe.martin2@splunk.com</div>
<svg class="a" style="left:464.0px;top:675.3px;" width="13" height="13" viewBox="0 0 13 13"><path d="M3.2 0.8 L5.2 3.6 L4 5.2 C4.6 6.8 6.2 8.4 7.8 9 L9.4 7.8 L12.2 9.8 L11 11.6 C10.2 12.4 9 12.4 7.5 11.6 C4.5 10 2.5 8 1.2 5.2 C0.5 3.8 0.6 2.6 1.4 1.8 Z" fill="none" stroke="#8a8a8a" stroke-width="1.1" stroke-linejoin="round"/></svg>
<div class="t" style="left:483.0px;top:674.80px;font-size:13.6px;line-height:13.6px;color:#777777;">13300133027</div>
<div class="a" style="left:677.0px;top:657.9px;height:23.5px;"><div class="a" style="left:0;top:0;height:23.5px;border:1px solid #adc6ff;background:#f0f5ff;border-radius:4px;padding:0 8px;color:#1d39c4;font:13.3px/23.1px 'Liberation Sans', sans-serif;white-space:nowrap;position:relative;display:inline-block;">Email</div></div>
<div class="t" style="left:783.6px;top:641.30px;font-size:17px;line-height:17px;color:#f0323c;font-weight:700;letter-spacing:0.7px;">40</div>
<div class="a" style="left:949px;top:638.6px;width:39px;height:21px;background:#dcf3ef;border-radius:5px;"></div>
<svg class="a" style="left:959.5px;top:644.6px;" width="7" height="8" viewBox="0 0 7 8"><path d="M1 1.2 C2.5 1.8 4 3.5 5.2 6.3" fill="none" stroke="#3fb31e" stroke-width="1.4" stroke-linecap="round"/></svg>
<div class="t" style="left:971.0px;top:644.05px;font-size:10.5px;line-height:10.5px;color:#3fb31e;font-weight:700;">AI</div>
<div class="a" style="left:783.0px;top:668.7px;width:205.0px;height:7.0px;background:#efeff3;border-radius:4px;"></div>
<div class="a" style="left:783.0px;top:668.7px;width:82.0px;height:7.0px;background:linear-gradient(90deg,#e8303a,#fa5a1e);border-radius:4px;"></div>
<div class="t" style="left:783.5px;top:687.45px;font-size:12px;line-height:12px;color:#f04a52;">Low</div>
<div class="a" style="left:996.2px;top:657.7px;width:73px;height:24px;overflow:hidden;"><div class="a" style="left:0;top:0;height:24px;border:1px solid #d9d9d9;background:#fafafa;border-radius:4px;padding:0 8px;color:#1f1f1f;font:13.3px/23.6px 'Liberation Sans', sans-serif;white-space:nowrap;position:relative;display:inline-block;">Unqualified</div></div>
<div class="a" style="left:1103.2px;top:657.7px;height:24px;"><div class="a" style="left:0;top:0;height:24px;border:1px solid #d9d9d9;background:#fafafa;border-radius:4px;padding:0 8px;color:#1f1f1f;font:13.3px/23.6px 'Liberation Sans', sans-serif;white-space:nowrap;position:relative;display:inline-block;">Technology</div></div>
<div class="t" style="left:1263.3px;top:662.05px;font-size:15px;line-height:15px;color:#1f1f1f;">Daniel Miller</div>
<div class="a" style="left:1423.7px;top:664.4px;width:11px;height:11px;border-radius:50%;background:#f7a21b;"></div>
<div class="t" style="left:1440.2px;top:663.15px;font-size:14.3px;line-height:14.3px;color:#505050;">Created 2w ago</div>
<div class="a" style="left:34.0px;top:711.2px;width:1742.0px;height:1.0px;background:#ededf3;"></div>
<div class="t" style="left:55.2px;top:746.50px;font-size:15px;line-height:15px;color:#1f1f1f;">5</div>
<div class="t" style="left:91.0px;top:746.35px;font-size:15.3px;line-height:15.3px;color:#1677ff;">Ella Garcia</div>
<div class="t" style="left:251.0px;top:735.10px;font-size:15px;line-height:15px;color:#1f1f1f;font-weight:700;">Ella Garcia</div>
<div class="t" style="left:251.0px;top:760.20px;font-size:13.4px;line-height:13.4px;color:#888888;">Dropbox, Inc.</div>
<svg class="a" style="left:464.0px;top:737.0px;" width="13" height="11" viewBox="0 0 13 11"><rect x="0.7" y="0.7" width="11.6" height="9" rx="1" fill="none" stroke="#8a8a8a" stroke-width="1.1"/><path d="M0.9 1.5 L6.5 5.8 L12.1 1.5" fill="none" stroke="#8a8a8a" stroke-width="1.1"/></svg>
<div class="t" style="left:483.0px;top:734.95px;font-size:13.1px;line-height:13.1px;color:#1677ff;">ella.garcia2@dropbox.com</div>
<svg class="a" style="left:464.0px;top:759.9px;" width="13" height="13" viewBox="0 0 13 13"><path d="M3.2 0.8 L5.2 3.6 L4 5.2 C4.6 6.8 6.2 8.4 7.8 9 L9.4 7.8 L12.2 9.8 L11 11.6 C10.2 12.4 9 12.4 7.5 11.6 C4.5 10 2.5 8 1.2 5.2 C0.5 3.8 0.6 2.6 1.4 1.8 Z" fill="none" stroke="#8a8a8a" stroke-width="1.1" stroke-linejoin="round"/></svg>
<div class="t" style="left:483.0px;top:759.40px;font-size:13.6px;line-height:13.6px;color:#777777;">13100131029</div>
<div class="a" style="left:677.0px;top:742.5px;width:73px;height:23.5px;overflow:hidden;"><div class="a" style="left:0;top:0;height:23.5px;border:1px solid #87e8de;background:#e6fffb;border-radius:4px;padding:0 8px;color:#08979c;font:13.3px/23.1px 'Liberation Sans', sans-serif;white-space:nowrap;position:relative;display:inline-block;">Telemarketing</div></div>
<div class="t" style="left:783.6px;top:725.90px;font-size:17px;line-height:17px;color:#f0323c;font-weight:700;letter-spacing:0.7px;">38</div>
<div class="a" style="left:949px;top:723.2px;width:39px;height:21px;background:#dcf3ef;border-radius:5px;"></div>
<svg class="a" style="left:959.5px;top:729.2px;" width="7" height="8" viewBox="0 0 7 8"><path d="M1 1.2 C2.5 1.8 4 3.5 5.2 6.3" fill="none" stroke="#3fb31e" stroke-width="1.4" stroke-linecap="round"/></svg>
<div class="t" style="left:971.0px;top:728.65px;font-size:10.5px;line-height:10.5px;color:#3fb31e;font-weight:700;">AI</div>
<div class="a" style="left:783.0px;top:753.3px;width:205.0px;height:7.0px;background:#efeff3;border-radius:4px;"></div>
<div class="a" style="left:783.0px;top:753.3px;width:77.9px;height:7.0px;background:linear-gradient(90deg,#e8303a,#fa5a1e);border-radius:4px;"></div>
<div class="t" style="left:783.5px;top:772.05px;font-size:12px;line-height:12px;color:#f04a52;">Low</div>
<div class="a" style="left:996.2px;top:742.3px;width:73px;height:24px;overflow:hidden;"><div class="a" style="left:0;top:0;height:24px;border:1px solid #d9d9d9;background:#fafafa;border-radius:4px;padding:0 8px;color:#1f1f1f;font:13.3px/23.6px 'Liberation Sans', sans-serif;white-space:nowrap;position:relative;display:inline-block;">Unqualified</div></div>
<div class="a" style="left:1103.2px;top:742.3px;height:24px;"><div class="a" style="left:0;top:0;height:24px;border:1px solid #d9d9d9;background:#fafafa;border-radius:4px;padding:0 8px;color:#1f1f1f;font:13.3px/23.6px 'Liberation Sans', sans-serif;white-space:nowrap;position:relative;display:inline-block;">Technology</div></div>
<div class="t" style="left:1263.3px;top:746.65px;font-size:15px;line-height:15px;color:#1f1f1f;">Sarah Williams</div>
<div class="a" style="left:1423.7px;top:749.0px;width:11px;height:11px;border-radius:50%;background:#f7a21b;"></div>
<div class="t" style="left:1440.2px;top:747.75px;font-size:14.3px;line-height:14.3px;color:#505050;">Created 2w ago</div>
<div class="a" style="left:34.0px;top:795.8px;width:1742.0px;height:1.0px;background:#ededf3;"></div>
<div class="t" style="left:55.2px;top:831.10px;font-size:15px;line-height:15px;color:#1f1f1f;">6</div>
<div class="t" style="left:91.0px;top:830.95px;font-size:15.3px;line-height:15.3px;color:#1677ff;">Mia Lewis</div>
<div class="t" style="left:251.0px;top:819.70px;font-size:15px;line-height:15px;color:#1f1f1f;font-weight:700;">Mia Lewis</div>
<div class="t" style="left:251.0px;top:844.80px;font-size:13.4px;line-height:13.4px;color:#888888;">Snowflake Inc.</div>
<svg class="a" style="left:464.0px;top:821.6px;" width="13" height="11" viewBox="0 0 13 11"><rect x="0.7" y="0.7" width="11.6" height="9" rx="1" fill="none" stroke="#8a8a8a" stroke-width="1.1"/><path d="M0.9 1.5 L6.5 5.8 L12.1 1.5" fill="none" stroke="#8a8a8a" stroke-width="1.1"/></svg>
<div class="t" style="left:483.0px;top:819.55px;font-size:13.1px;line-height:13.1px;color:#1677ff;">mia.lewis2@snowflake.com</div>
<svg class="a" style="left:464.0px;top:844.5px;" width="13" height="13" viewBox="0 0 13 13"><path d="M3.2 0.8 L5.2 3.6 L4 5.2 C4.6 6.8 6.2 8.4 7.8 9 L9.4 7.8 L12.2 9.8 L11 11.6 C10.2 12.4 9 12.4 7.5 11.6 C4.5 10 2.5 8 1.2 5.2 C0.5 3.8 0.6 2.6 1.4 1.8 Z" fill="none" stroke="#8a8a8a" stroke-width="1.1" stroke-linejoin="round"/></svg>
<div class="t" style="left:483.0px;top:844.00px;font-size:13.6px;line-height:13.6px;color:#777777;">13800138031</div>
<div class="a" style="left:677.0px;top:827.1px;height:23.5px;"><div class="a" style="left:0;top:0;height:23.5px;border:1px solid #adc6ff;background:#f0f5ff;border-radius:4px;padding:0 8px;color:#1d39c4;font:13.3px/23.1px 'Liberation Sans', sans-serif;white-space:nowrap;position:relative;display:inline-block;">Email</div></div>
<div class="t" style="left:783.6px;top:810.50px;font-size:17px;line-height:17px;color:#f0323c;font-weight:700;letter-spacing:0.7px;">22</div>
<div class="a" style="left:949px;top:807.8px;width:39px;height:21px;background:#dcf3ef;border-radius:5px;"></div>
<svg class="a" style="left:959.5px;top:813.8px;" width="7" height="8" viewBox="0 0 7 8"><path d="M1 1.2 C2.5 1.8 4 3.5 5.2 6.3" fill="none" stroke="#3fb31e" stroke-width="1.4" stroke-linecap="round"/></svg>
<div class="t" style="left:971.0px;top:813.25px;font-size:10.5px;line-height:10.5px;color:#3fb31e;font-weight:700;">AI</div>
<div class="a" style="left:783.0px;top:837.9px;width:205.0px;height:7.0px;background:#efeff3;border-radius:4px;"></div>
<div class="a" style="left:783.0px;top:837.9px;width:45.1px;height:7.0px;background:linear-gradient(90deg,#e8303a,#fa5a1e);border-radius:4px;"></div>
<div class="t" style="left:783.5px;top:856.65px;font-size:12px;line-height:12px;color:#f04a52;">Low</div>
<div class="a" style="left:996.2px;top:826.9px;width:73px;height:24px;overflow:hidden;"><div class="a" style="left:0;top:0;height:24px;border:1px solid #d9d9d9;background:#fafafa;border-radius:4px;padding:0 8px;color:#1f1f1f;font:13.3px/23.6px 'Liberation Sans', sans-serif;white-space:nowrap;position:relative;display:inline-block;">Unqualified</div></div>
<div class="a" style="left:1103.2px;top:826.9px;height:24px;"><div class="a" style="left:0;top:0;height:24px;border:1px solid #d9d9d9;background:#fafafa;border-radius:4px;padding:0 8px;color:#1f1f1f;font:13.3px/23.6px 'Liberation Sans', sans-serif;white-space:nowrap;position:relative;display:inline-block;">Technology</div></div>
<div class="t" style="left:1263.3px;top:831.25px;font-size:15px;line-height:15px;color:#1f1f1f;">Sales Manager</div>
<div class="a" style="left:1423.7px;top:833.6px;width:11px;height:11px;border-radius:50%;background:#f7a21b;"></div>
<div class="t" style="left:1440.2px;top:832.35px;font-size:14.3px;line-height:14.3px;color:#505050;">Created 2w ago</div>
<div class="a" style="left:34.0px;top:880.4px;width:1742.0px;height:1.0px;background:#ededf3;"></div>
<div class="t" style="left:55.2px;top:915.70px;font-size:15px;line-height:15px;color:#1f1f1f;">7</div>
<div class="t" style="left:91.0px;top:915.55px;font-size:15.3px;line-height:15.3px;color:#1677ff;">Evelyn Scott</div>
<div class="t" style="left:251.0px;top:904.30px;font-size:15px;line-height:15px;color:#1f1f1f;font-weight:700;">Evelyn Scott</div>
<div class="t" style="left:251.0px;top:929.40px;font-size:13.4px;line-height:13.4px;color:#888888;">JD.com, Inc.</div>
<svg class="a" style="left:464.0px;top:906.2px;" width="13" height="11" viewBox="0 0 13 11"><rect x="0.7" y="0.7" width="11.6" height="9" rx="1" fill="none" stroke="#8a8a8a" stroke-width="1.1"/><path d="M0.9 1.5 L6.5 5.8 L12.1 1.5" fill="none" stroke="#8a8a8a" stroke-width="1.1"/></svg>
<div class="t" style="left:483.0px;top:904.15px;font-size:13.1px;line-height:13.1px;color:#1677ff;">evelyn.scott2@jd.com</div>
<svg class="a" style="left:464.0px;top:929.1px;" width="13" height="13" viewBox="0 0 13 13"><path d="M3.2 0.8 L5.2 3.6 L4 5.2 C4.6 6.8 6.2 8.4 7.8 9 L9.4 7.8 L12.2 9.8 L11 11.6 C10.2 12.4 9 12.4 7.5 11.6 C4.5 10 2.5 8 1.2 5.2 C0.5 3.8 0.6 2.6 1.4 1.8 Z" fill="none" stroke="#8a8a8a" stroke-width="1.1" stroke-linejoin="round"/></svg>
<div class="t" style="left:483.0px;top:928.60px;font-size:13.6px;line-height:13.6px;color:#777777;">13300133037</div>
<div class="a" style="left:677.0px;top:911.7px;height:23.5px;"><div class="a" style="left:0;top:0;height:23.5px;border:1px solid #adc6ff;background:#f0f5ff;border-radius:4px;padding:0 8px;color:#1d39c4;font:13.3px/23.1px 'Liberation Sans', sans-serif;white-space:nowrap;position:relative;display:inline-block;">Email</div></div>
<div class="t" style="left:783.6px;top:895.10px;font-size:17px;line-height:17px;color:#f0323c;font-weight:700;letter-spacing:0.7px;">13</div>
<div class="a" style="left:949px;top:892.4px;width:39px;height:21px;background:#dcf3ef;border-radius:5px;"></div>
<svg class="a" style="left:959.5px;top:898.4px;" width="7" height="8" viewBox="0 0 7 8"><path d="M1 1.2 C2.5 1.8 4 3.5 5.2 6.3" fill="none" stroke="#3fb31e" stroke-width="1.4" stroke-linecap="round"/></svg>
<div class="t" style="left:971.0px;top:897.85px;font-size:10.5px;line-height:10.5px;color:#3fb31e;font-weight:700;">AI</div>
<div class="a" style="left:783.0px;top:922.5px;width:205.0px;height:7.0px;background:#efeff3;border-radius:4px;"></div>
<div class="a" style="left:783.0px;top:922.5px;width:26.6px;height:7.0px;background:linear-gradient(90deg,#e8303a,#fa5a1e);border-radius:4px;"></div>
<div class="t" style="left:783.5px;top:941.25px;font-size:12px;line-height:12px;color:#f04a52;">Low</div>
<div class="a" style="left:996.2px;top:911.5px;width:73px;height:24px;overflow:hidden;"><div class="a" style="left:0;top:0;height:24px;border:1px solid #d9d9d9;background:#fafafa;border-radius:4px;padding:0 8px;color:#1f1f1f;font:13.3px/23.6px 'Liberation Sans', sans-serif;white-space:nowrap;position:relative;display:inline-block;">Unqualified</div></div>
<div class="a" style="left:1103.2px;top:911.5px;height:24px;"><div class="a" style="left:0;top:0;height:24px;border:1px solid #d9d9d9;background:#fafafa;border-radius:4px;padding:0 8px;color:#1f1f1f;font:13.3px/23.6px 'Liberation Sans', sans-serif;white-space:nowrap;position:relative;display:inline-block;">Retail</div></div>
<div class="t" style="left:1263.3px;top:915.85px;font-size:15px;line-height:15px;color:#1f1f1f;">Emily Johnson</div>
<div class="a" style="left:1423.7px;top:918.2px;width:11px;height:11px;border-radius:50%;background:#f7a21b;"></div>
<div class="t" style="left:1440.2px;top:916.95px;font-size:14.3px;line-height:14.3px;color:#505050;">Created 1w ago</div>
<div class="a" style="left:34.0px;top:965.0px;width:1742.0px;height:1.0px;background:#ededf3;"></div>
<div class="t" style="left:55.2px;top:1000.30px;font-size:15px;line-height:15px;color:#1f1f1f;">8</div>
<div class="t" style="left:91.0px;top:1000.15px;font-size:15.3px;line-height:15.3px;color:#1677ff;">Robert Williams</div>
<div class="t" style="left:251.0px;top:988.90px;font-size:15px;line-height:15px;color:#1f1f1f;font-weight:700;">Robert Williams</div>
<div class="t" style="left:251.0px;top:1014.00px;font-size:13.4px;line-height:13.4px;color:#888888;">HealthFirst Clinics</div>
<svg class="a" style="left:464.0px;top:990.8px;" width="13" height="11" viewBox="0 0 13 11"><rect x="0.7" y="0.7" width="11.6" height="9" rx="1" fill="none" stroke="#8a8a8a" stroke-width="1.1"/><path d="M0.9 1.5 L6.5 5.8 L12.1 1.5" fill="none" stroke="#8a8a8a" stroke-width="1.1"/></svg>
<div class="t" style="left:483.0px;top:988.75px;font-size:13.1px;line-height:13.1px;color:#1677ff;">robert.williams@healthfirst.org</div>
<svg class="a" style="left:464.0px;top:1013.7px;" width="13" height="13" viewBox="0 0 13 13"><path d="M3.2 0.8 L5.2 3.6 L4 5.2 C4.6 6.8 6.2 8.4 7.8 9 L9.4 7.8 L12.2 9.8 L11 11.6 C10.2 12.4 9 12.4 7.5 11.6 C4.5 10 2.5 8 1.2 5.2 C0.5 3.8 0.6 2.6 1.4 1.8 Z" fill="none" stroke="#8a8a8a" stroke-width="1.1" stroke-linejoin="round"/></svg>
<div class="t" style="left:483.0px;top:1013.20px;font-size:13.6px;line-height:13.6px;color:#777777;">(555) 345-6789</div>
<div class="a" style="left:677.0px;top:996.3px;height:23.5px;"><div class="a" style="left:0;top:0;height:23.5px;border:1px solid #b7eb8f;background:#f6ffed;border-radius:4px;padding:0 8px;color:#389e0d;font:13.3px/23.1px 'Liberation Sans', sans-serif;white-space:nowrap;position:relative;display:inline-block;">Referral</div></div>
<div class="t" style="left:783.6px;top:979.70px;font-size:17px;line-height:17px;color:#f0323c;font-weight:700;letter-spacing:0.7px;">48</div>
<div class="a" style="left:949px;top:977.0px;width:39px;height:21px;background:#dcf3ef;border-radius:5px;"></div>
<svg class="a" style="left:959.5px;top:983.0px;" width="7" height="8" viewBox="0 0 7 8"><path d="M1 1.2 C2.5 1.8 4 3.5 5.2 6.3" fill="none" stroke="#3fb31e" stroke-width="1.4" stroke-linecap="round"/></svg>
<div class="t" style="left:971.0px;top:982.45px;font-size:10.5px;line-height:10.5px;color:#3fb31e;font-weight:700;">AI</div>
<div class="a" style="left:783.0px;top:1007.1px;width:205.0px;height:7.0px;background:#efeff3;border-radius:4px;"></div>
<div class="a" style="left:783.0px;top:1007.1px;width:98.4px;height:7.0px;background:linear-gradient(90deg,#e8303a,#fa5a1e);border-radius:4px;"></div>
<div class="t" style="left:783.5px;top:1025.85px;font-size:12px;line-height:12px;color:#f04a52;">Low</div>
<div class="a" style="left:996.2px;top:996.1px;height:24px;"><div class="a" style="left:0;top:0;height:24px;border:1px solid #b7eb8f;background:#f6ffed;border-radius:4px;padding:0 8px;color:#389e0d;font:13.3px/23.6px 'Liberation Sans', sans-serif;white-space:nowrap;position:relative;display:inline-block;">Qualified</div></div>
<div class="a" style="left:1103.2px;top:996.1px;height:24px;"><div class="a" style="left:0;top:0;height:24px;border:1px solid #d9d9d9;background:#fafafa;border-radius:4px;padding:0 8px;color:#1f1f1f;font:13.3px/23.6px 'Liberation Sans', sans-serif;white-space:nowrap;position:relative;display:inline-block;">Healthcare</div></div>
<div class="t" style="left:1263.3px;top:1000.45px;font-size:15px;line-height:15px;color:#1f1f1f;">Liam Taylor</div>
<div class="a" style="left:1423.7px;top:1002.8px;width:11px;height:11px;border-radius:50%;background:#f5424b;"></div>
<div class="t" style="left:1440.2px;top:1001.55px;font-size:14.3px;line-height:14.3px;color:#505050;">Created 1mo ago</div>
<div class="a" style="left:34.0px;top:1049.6px;width:1742.0px;height:1.0px;background:#ededf3;"></div>
<div class="t" style="left:55.2px;top:1084.90px;font-size:15px;line-height:15px;color:#1f1f1f;">9</div>
<div class="t" style="left:91.0px;top:1084.75px;font-size:15.3px;line-height:15.3px;color:#1677ff;">Christopher Wil…</div>
<div class="t" style="left:251.0px;top:1073.50px;font-size:15px;line-height:15px;color:#1f1f1f;font-weight:700;">Christopher Wilson</div>
<div class="t" style="left:251.0px;top:1098.60px;font-size:13.4px;line-height:13.4px;color:#888888;">Apex Manufacturing</div>
<svg class="a" style="left:464.0px;top:1075.4px;" width="13" height="11" viewBox="0 0 13 11"><rect x="0.7" y="0.7" width="11.6" height="9" rx="1" fill="none" stroke="#8a8a8a" stroke-width="1.1"/><path d="M0.9 1.5 L6.5 5.8 L12.1 1.5" fill="none" stroke="#8a8a8a" stroke-width="1.1"/></svg>
<div class="t" style="left:483.0px;top:1073.35px;font-size:13.1px;line-height:13.1px;color:#1677ff;">christopher.wilson@apexman…</div>
<svg class="a" style="left:464.0px;top:1098.3px;" width="13" height="13" viewBox="0 0 13 13"><path d="M3.2 0.8 L5.2 3.6 L4 5.2 C4.6 6.8 6.2 8.4 7.8 9 L9.4 7.8 L12.2 9.8 L11 11.6 C10.2 12.4 9 12.4 7.5 11.6 C4.5 10 2.5 8 1.2 5.2 C0.5 3.8 0.6 2.6 1.4 1.8 Z" fill="none" stroke="#8a8a8a" stroke-width="1.1" stroke-linejoin="round"/></svg>
<div class="t" style="left:483.0px;top:1097.80px;font-size:13.6px;line-height:13.6px;color:#777777;">(555) 789-0123</div>
<div class="a" style="left:677.0px;top:1080.9px;width:73px;height:23.5px;overflow:hidden;"><div class="a" style="left:0;top:0;height:23.5px;border:1px solid #d9d9d9;background:#fafafa;border-radius:4px;padding:0 8px;color:#1f1f1f;font:13.3px/23.1px 'Liberation Sans', sans-serif;white-space:nowrap;position:relative;display:inline-block;">trade_show</div></div>
<div class="t" style="left:783.6px;top:1064.30px;font-size:17px;line-height:17px;color:#f0323c;font-weight:700;letter-spacing:0.7px;">48</div>
<div class="a" style="left:949px;top:1061.6px;width:39px;height:21px;background:#dcf3ef;border-radius:5px;"></div>
<svg class="a" style="left:959.5px;top:1067.6px;" width="7" height="8" viewBox="0 0 7 8"><path d="M1 1.2 C2.5 1.8 4 3.5 5.2 6.3" fill="none" stroke="#3fb31e" stroke-width="1.4" stroke-linecap="round"/></svg>
<div class="t" style="left:971.0px;top:1067.05px;font-size:10.5px;line-height:10.5px;color:#3fb31e;font-weight:700;">AI</div>
<div class="a" style="left:783.0px;top:1091.7px;width:205.0px;height:7.0px;background:#efeff3;border-radius:4px;"></div>
<div class="a" style="left:783.0px;top:1091.7px;width:98.4px;height:7.0px;background:linear-gradient(90deg,#e8303a,#fa5a1e);border-radius:4px;"></div>
<div class="t" style="left:783.5px;top:1110.45px;font-size:12px;line-height:12px;color:#f04a52;">Low</div>
<div class="a" style="left:996.2px;top:1080.7px;height:24px;"><div class="a" style="left:0;top:0;height:24px;border:1px solid #b7eb8f;background:#f6ffed;border-radius:4px;padding:0 8px;color:#389e0d;font:13.3px/23.6px 'Liberation Sans', sans-serif;white-space:nowrap;position:relative;display:inline-block;">Qualified</div></div>
<div class="a" style="left:1103.2px;top:1080.7px;height:24px;"><div class="a" style="left:0;top:0;height:24px;border:1px solid #d9d9d9;background:#fafafa;border-radius:4px;padding:0 8px;color:#1f1f1f;font:13.3px/23.6px 'Liberation Sans', sans-serif;white-space:nowrap;position:relative;display:inline-block;">Manufacturing</div></div>
<div class="t" style="left:1263.3px;top:1085.05px;font-size:15px;line-height:15px;color:#1f1f1f;">Liam Taylor</div>
<div class="a" style="left:1423.7px;top:1087.4px;width:11px;height:11px;border-radius:50%;background:#f5424b;"></div>
<div class="t" style="left:1440.2px;top:1086.15px;font-size:14.3px;line-height:14.3px;color:#505050;">Created 2mo ago</div>
<div class="a" style="left:34.0px;top:1134.2px;width:1742.0px;height:1.0px;background:#ededf3;"></div>
<svg class="a" style="left:600.0px;top:367.0px;" width="20" height="28" viewBox="0 0 20 28"><path d="M3.2 2.6 L3.2 21.2 L7.4 17.2 L10.5 24.9 L14.2 23.4 L11.1 16.5 L16.6 16.5 Z" fill="#000" stroke="#fff" stroke-width="1" stroke-linejoin="round"/></svg>
<div class="a" style="left:1749px;top:1032px;width:90px;height:68px;border-radius:18px;background:#fdfdff;box-shadow:0 1px 8px rgba(0,0,0,0.10);"></div>
<div class="a" style="left:1761.5px;top:1043.6px;width:42px;height:42px;border-radius:50%;background:linear-gradient(200deg,#9a7cf0,#c09cf2);"></div>
<div class="a" style="left:1773px;top:1055px;width:19px;height:8px;border-radius:10px 10px 0 0;background:#6f6592;"></div>
<div class="a" style="left:1517.5px;top:1059.5px;width:299px;height:45px;border-radius:10px;background:#fdfdff;box-shadow:0 2px 10px rgba(0,0,0,0.11);"></div>
<svg class="a" style="left:1534.0px;top:1074.0px;" width="9" height="15" viewBox="0 0 9 15"><circle cx="1.8" cy="1.8" r="1.3" fill="#333"/><circle cx="1.8" cy="7.3" r="1.3" fill="#333"/><circle cx="1.8" cy="12.8" r="1.3" fill="#333"/><circle cx="7" cy="1.8" r="1.3" fill="#333"/><circle cx="7" cy="7.3" r="1.3" fill="#333"/><circle cx="7" cy="12.8" r="1.3" fill="#333"/></svg>
<div class="a" style="left:1562.0px;top:1073.0px;width:5.5px;height:17.0px;background:#1f2229;border-radius:1px;"></div>
<div class="a" style="left:1574.0px;top:1073.0px;width:5.5px;height:17.0px;background:#1f2229;border-radius:1px;"></div>
<div class="t" style="left:1597.2px;top:1073.60px;font-size:16px;line-height:16px;color:#50555c;">00:00</div>
<div class="t" style="left:1645.5px;top:1073.60px;font-size:16px;line-height:16px;color:#50555c;">/</div>
<div class="t" style="left:1658.0px;top:1073.60px;font-size:16px;line-height:16px;color:#50555c;">05:00</div>
<div class="a" style="left:1723.0px;top:1066.7px;width:77.0px;height:29.8px;background:#ee3b3b;border-radius:7px;"></div>
<svg class="a" style="left:1737.0px;top:1075.0px;" width="50" height="14" viewBox="0 0 50 14"><g stroke="#fff" stroke-width="1.2" fill="none">
<path d="M1 3 L4 1 M0.5 6 L4.5 4 L1.5 9 L5 8 M0.5 12.5 L5 11 M7 3 H12 M9.5 0.5 V6 M6.5 6 H12.5 M7.5 8.5 H11.5 V13 H7.5 Z"/>
<path d="M14 2.5 H25 M19.5 0.5 V13.5 M15.5 5 H23.5 V9 H15.5 Z M19 9.5 L14 13 M20 9.5 L25 13"/>
<path d="M27.5 1.5 H35.5 V6 M27 4 H35.5 M26.5 6.5 H37.5 M31.5 6.5 V13 L30 12 M27 8 L29.5 10 M36 8 L33.5 10 M27 13 L30 11 M36.5 13 L33 11"/>
<path d="M39 3 H44 M41.5 0.5 V13.5 M38.5 6 H44.5 M39.5 8 V12 M43.5 8 V11 M46.5 1.5 V10 M48.5 0.5 V13 L47 12.5"/>
</g></svg>
</body></html>
